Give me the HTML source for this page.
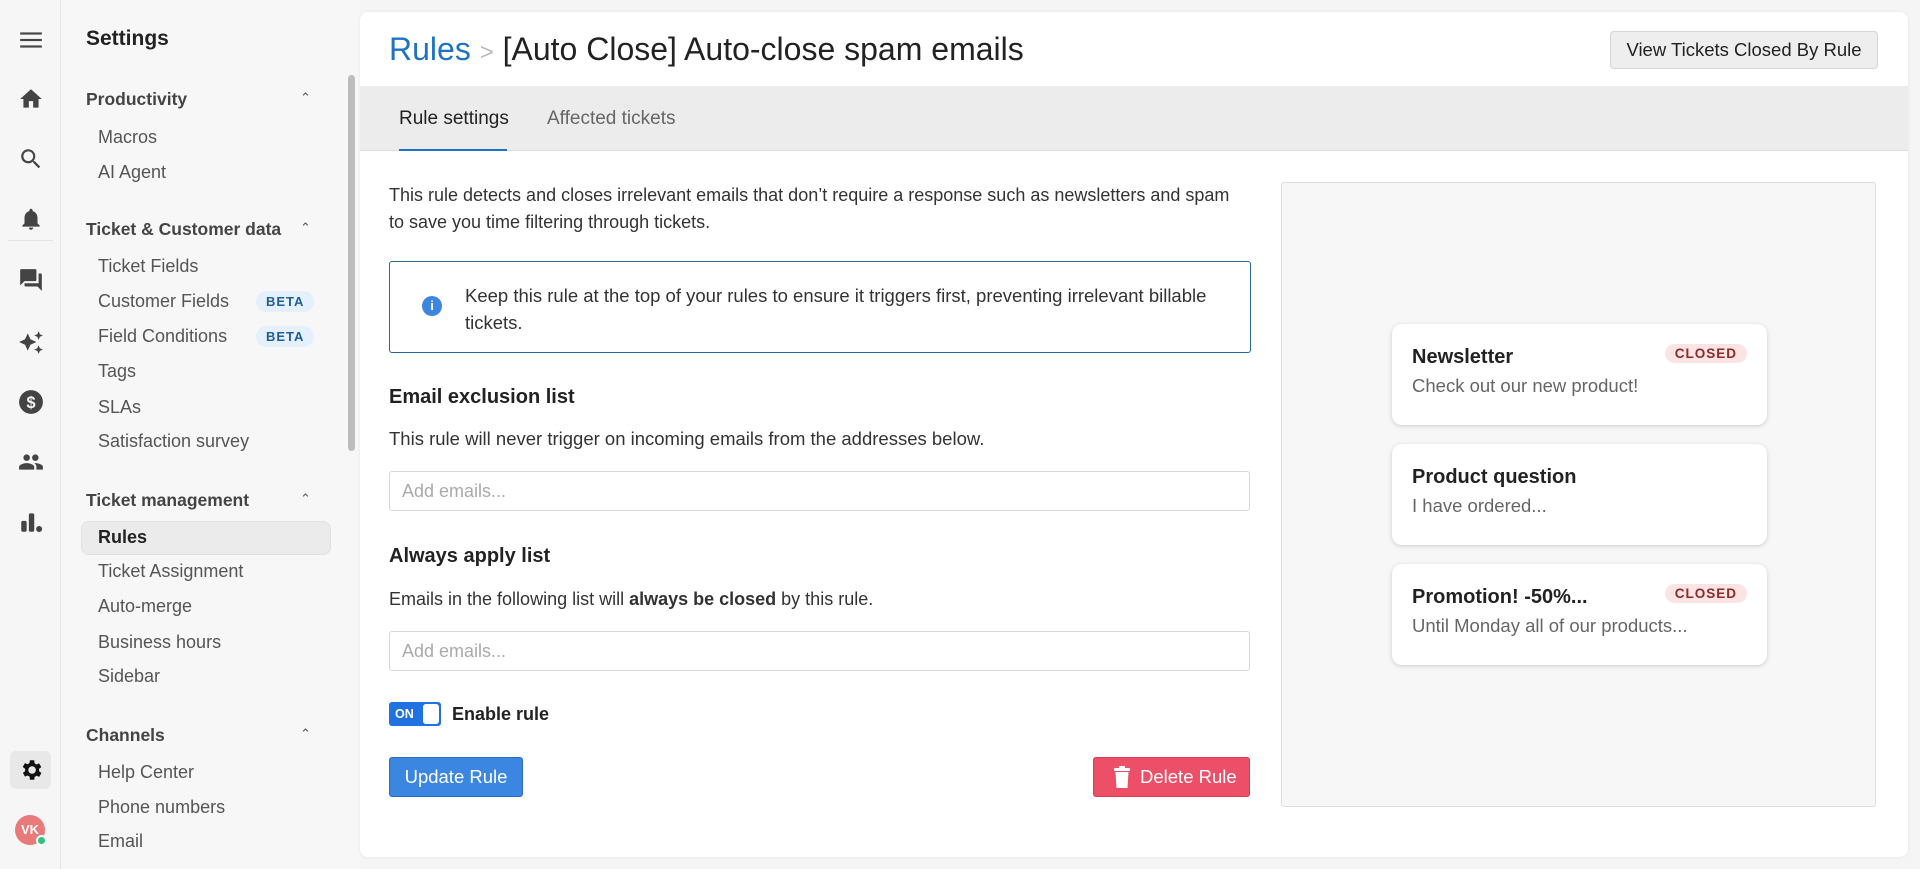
<!DOCTYPE html>
<html><head><meta charset="utf-8"><style>
*{box-sizing:border-box;margin:0;padding:0}
body{width:1920px;height:869px;overflow:hidden;background:#f5f5f5;font-family:"Liberation Sans",sans-serif;color:#222;position:relative}
.a{position:absolute;white-space:nowrap}
.rail{position:absolute;left:0;top:0;width:61px;height:869px;border-right:1px solid #e6e6e6;background:#f6f6f6}
.ic{position:absolute;left:18px;width:26px;height:26px;fill:#444}
.side{position:absolute;left:61px;top:0;width:299px;height:869px;background:#f7f7f7}
.h{font-weight:bold;font-size:17.5px;color:#444;left:86px}
.it{font-size:18px;color:#555;left:98px}
.chev{left:300px;font-size:13px;color:#555}
.beta{background:#e4f0fb;color:#1f5d99;font-weight:bold;font-size:13px;letter-spacing:1px;padding:3px 10px;border-radius:11px;left:256px}
.card{position:absolute;left:360px;top:12px;width:1548px;height:845px;background:#fff;border-radius:8px;box-shadow:0 0 3px rgba(0,0,0,.08)}
.inp{position:absolute;left:389px;width:861px;height:40px;border:1px solid #d8d8d8;border-radius:3px;font-size:18px;color:#aaa;padding:9px 12px}
.tc{position:absolute;left:1392px;width:375px;height:101px;background:#fff;border-radius:10px;box-shadow:0 1px 5px rgba(0,0,0,.18);padding:22px 20px}
.tc b{display:block;font-size:20px;color:#222;margin-bottom:6px}
.tc span{font-size:18.5px;color:#666}
.cl{position:absolute;right:20px;top:20px;background:#fce4e4;color:#8b2a2a;font-weight:bold;font-size:13.5px;letter-spacing:1px;padding:2px 10px;border-radius:11px}
</style></head><body>
<div class="rail">
<svg class="ic" style="top:27px" viewBox="0 0 24 24"><rect x="2" y="5" width="20" height="2"/><rect x="2" y="11" width="20" height="2"/><rect x="2" y="17" width="20" height="2"/></svg>
<svg class="ic" style="top:86px" viewBox="0 0 24 24"><path d="M10 20v-6h4v6h5v-8h3L12 3 2 12h3v8z"/></svg>
<svg class="ic" style="top:146px" viewBox="0 0 24 24"><path d="M15.5 14h-.8l-.3-.3A6.5 6.5 0 1 0 9.5 16c1.6 0 3.1-.6 4.2-1.6l.3.3v.8l5 5 1.5-1.5-5-5zm-6 0C7 14 5 12 5 9.5S7 5 9.5 5 14 7 14 9.5 12 14 9.5 14z"/></svg>
<svg class="ic" style="top:206px" viewBox="0 0 24 24"><path d="M12 22c1.1 0 2-.9 2-2h-4c0 1.1.9 2 2 2zm6-6v-5c0-3.1-1.6-5.6-4.5-6.3V4c0-.8-.7-1.5-1.5-1.5s-1.5.7-1.5 1.5v.7C7.6 5.4 6 7.9 6 11v5l-2 2v1h16v-1l-2-2z"/></svg>
<div class="a" style="left:8px;top:240px;width:45px;border-top:1px solid #e4e4e4"></div>
<svg class="ic" style="top:267px" viewBox="0 0 24 24"><path d="M21 6h-2v9H6v2c0 .6.4 1 1 1h11l4 4V7c0-.6-.4-1-1-1zm-4 6V3c0-.6-.4-1-1-1H3c-.6 0-1 .4-1 1v14l4-4h10c.6 0 1-.4 1-1z"/></svg>
<svg class="ic" style="top:329px" viewBox="0 0 24 24"><path d="M9 4l2.5 5.5L17 12l-5.5 2.5L9 20l-2.5-5.5L1 12l5.5-2.5zM19 2l1.2 2.8L23 6l-2.8 1.2L19 10l-1.2-2.8L15 6l2.8-1.2zM19 15l1.2 2.8L23 19l-2.8 1.2L19 23l-1.2-2.8L15 19l2.8-1.2z"/></svg>
<svg class="ic" style="top:389px" viewBox="0 0 24 24"><circle cx="12" cy="12" r="11"/><text x="12" y="17.5" font-size="15" font-weight="bold" fill="#f6f6f6" text-anchor="middle" font-family="Liberation Sans">$</text></svg>
<svg class="ic" style="top:449px" viewBox="0 0 24 24"><path d="M16 11a3 3 0 1 0 0-6 3 3 0 0 0 0 6zm-8 0a3 3 0 1 0 0-6 3 3 0 0 0 0 6zm0 2c-2.3 0-7 1.2-7 3.5V19h14v-2.5C15 14.2 10.3 13 8 13zm8 0h-1c1.2.8 2 2 2 3.5V19h6v-2.5c0-2.3-4.7-3.5-7-3.5z"/></svg>
<svg class="ic" style="top:509px" viewBox="0 0 24 24"><rect x="3" y="11" width="5" height="10" rx="1.5"/><rect x="10" y="4" width="5" height="17" rx="1.5"/><circle cx="19.5" cy="18.5" r="2.8"/></svg>
<div class="a" style="left:10px;top:751px;width:41px;height:38px;background:#e8e8e8;border-radius:6px"></div>
<svg class="ic" style="top:757px;fill:#111" viewBox="0 0 24 24"><path d="M19.4 13a7.5 7.5 0 0 0 0-2l2.1-1.6-2-3.5-2.5 1a7 7 0 0 0-1.7-1L15 3h-4l-.4 2.7a7 7 0 0 0-1.7 1l-2.5-1-2 3.5L6.6 11a7.5 7.5 0 0 0 0 2l-2.1 1.6 2 3.5 2.5-1a7 7 0 0 0 1.7 1L11 21h4l.4-2.7a7 7 0 0 0 1.7-1l2.5 1 2-3.5zM13 15.5a3.5 3.5 0 1 1 0-7 3.5 3.5 0 0 1 0 7z"/></svg>
<div class="a" style="left:15px;top:815px;width:30px;height:30px;border-radius:50%;background:#e87a7a;color:#fff;font-size:13px;font-weight:bold;text-align:center;line-height:30px">VK</div>
<div class="a" style="left:36px;top:835px;width:11px;height:11px;border-radius:50%;background:#2bc47a;border:2px solid #fff"></div>
</div>
<div class="side">
<div class="a" style="left:287px;top:75px;width:7px;height:376px;background:#bdbdbd;border-radius:4px"></div>
</div>
<div class="a" style="left:86px;top:27px;font-size:21px;font-weight:bold;color:#222">Settings</div>
<div class="a h" style="top:89px">Productivity</div><div class="a chev" style="top:90px">&#8963;</div>
<div class="a it" style="top:127px">Macros</div>
<div class="a it" style="top:162px">AI Agent</div>
<div class="a h" style="top:219px">Ticket &amp; Customer data</div><div class="a chev" style="top:220px">&#8963;</div>
<div class="a it" style="top:256px">Ticket Fields</div>
<div class="a it" style="top:291px">Customer Fields</div><div class="a beta" style="top:291px">BETA</div>
<div class="a it" style="top:326px">Field Conditions</div><div class="a beta" style="top:326px">BETA</div>
<div class="a it" style="top:361px">Tags</div>
<div class="a it" style="top:397px">SLAs</div>
<div class="a it" style="top:431px">Satisfaction survey</div>
<div class="a h" style="top:490px">Ticket management</div><div class="a chev" style="top:491px">&#8963;</div>
<div class="a" style="left:81px;top:521px;width:250px;height:34px;background:#ebebeb;border:1px solid #e0e0e0;border-radius:8px"></div>
<div class="a it" style="top:527px;font-weight:bold;color:#222">Rules</div>
<div class="a it" style="top:561px">Ticket Assignment</div>
<div class="a it" style="top:596px">Auto-merge</div>
<div class="a it" style="top:632px">Business hours</div>
<div class="a it" style="top:666px">Sidebar</div>
<div class="a h" style="top:725px">Channels</div><div class="a chev" style="top:726px">&#8963;</div>
<div class="a it" style="top:762px">Help Center</div>
<div class="a it" style="top:797px">Phone numbers</div>
<div class="a it" style="top:831px">Email</div>

<div class="card"></div>
<div class="a" style="left:389px;top:31px;font-size:32px;color:#222"><span style="color:#1f72c4">Rules</span> <span style="color:#bbb;font-size:24px">&gt;</span> [Auto Close] Auto-close spam emails</div>
<div class="a" style="left:1610px;top:31px;width:268px;height:38px;background:#eee;border:1px solid #d4d4d4;border-radius:4px;font-size:18.5px;text-align:center;line-height:36px;color:#222">View Tickets Closed By Rule</div>
<div class="a" style="left:360px;top:86px;width:1548px;height:65px;background:#ececec;border-bottom:1px solid #ddd"></div>
<div class="a" style="left:399px;top:108px;font-size:19px;color:#222">Rule settings</div>
<div class="a" style="left:547px;top:108px;font-size:19px;color:#666">Affected tickets</div>
<div class="a" style="left:399px;top:149px;width:108px;height:2px;background:#1f72c4"></div>

<div class="a" style="left:389px;top:182px;font-size:18px;line-height:27px;color:#333;white-space:normal;width:852px">This rule detects and closes irrelevant emails that don’t require a response such as newsletters and spam to save you time filtering through tickets.</div>
<div class="a" style="left:389px;top:261px;width:862px;height:92px;border:1px solid #2a6a96;border-radius:3px"></div>
<div class="a" style="left:422px;top:296px;width:20px;height:20px;border-radius:50%;background:#3c86e0;color:#fff;font-size:13px;font-weight:bold;text-align:center;line-height:20px">i</div>
<div class="a" style="left:465px;top:282px;font-size:18.5px;line-height:27px;color:#333">Keep this rule at the top of your rules to ensure it triggers first, preventing irrelevant billable<br>tickets.</div>
<div class="a" style="left:389px;top:386px;font-size:20px;font-weight:bold;color:#222">Email exclusion list</div>
<div class="a" style="left:389px;top:428px;font-size:18.5px;color:#333">This rule will never trigger on incoming emails from the addresses below.</div>
<div class="inp" style="top:471px">Add emails...</div>
<div class="a" style="left:389px;top:545px;font-size:20px;font-weight:bold;color:#222">Always apply list</div>
<div class="a" style="left:389px;top:589px;font-size:18px;color:#333">Emails in the following list will <b>always be closed</b> by this rule.</div>
<div class="inp" style="top:631px">Add emails...</div>
<div class="a" style="left:389px;top:702px;width:52px;height:24px;background:#1f72e0;border-radius:3px"></div>
<div class="a" style="left:395px;top:707px;font-size:12.5px;font-weight:bold;color:#fff">ON</div>
<div class="a" style="left:423px;top:704px;width:16px;height:20px;background:#fff;border-radius:3px"></div>
<div class="a" style="left:452px;top:704px;font-size:18px;font-weight:bold;color:#222">Enable rule</div>
<div class="a" style="left:389px;top:757px;width:134px;height:40px;background:#3a86e0;border:1px solid #2a6ec4;border-radius:3px;color:#fff;font-size:18.5px;text-align:center;line-height:38px">Update Rule</div>
<div class="a" style="left:1093px;top:757px;width:157px;height:40px;background:#ec4f67;border:1px solid #d63c55;border-radius:3px;color:#fff;font-size:18.5px;line-height:38px;padding-left:46px">Delete Rule</div>
<svg class="a" style="left:1114px;top:766px" width="16" height="22" viewBox="0 0 16 22"><rect x="0" y="2" width="16" height="3" rx="1" fill="#fff"/><rect x="5" y="0" width="6" height="3" fill="#fff"/><path d="M1.5 6h13l-1 16h-11z" fill="#fff"/></svg>

<div class="a" style="left:1281px;top:182px;width:595px;height:625px;background:#f7f7f7;border:1px solid #ddd;border-radius:3px"></div>
<div class="tc" style="top:324px"><b>Newsletter</b><span>Check out our new product!</span><div class="cl">CLOSED</div></div>
<div class="tc" style="top:444px"><b>Product question</b><span>I have ordered...</span></div>
<div class="tc" style="top:564px"><b>Promotion! -50%...</b><span>Until Monday all of our products...</span><div class="cl">CLOSED</div></div>
</body></html>
